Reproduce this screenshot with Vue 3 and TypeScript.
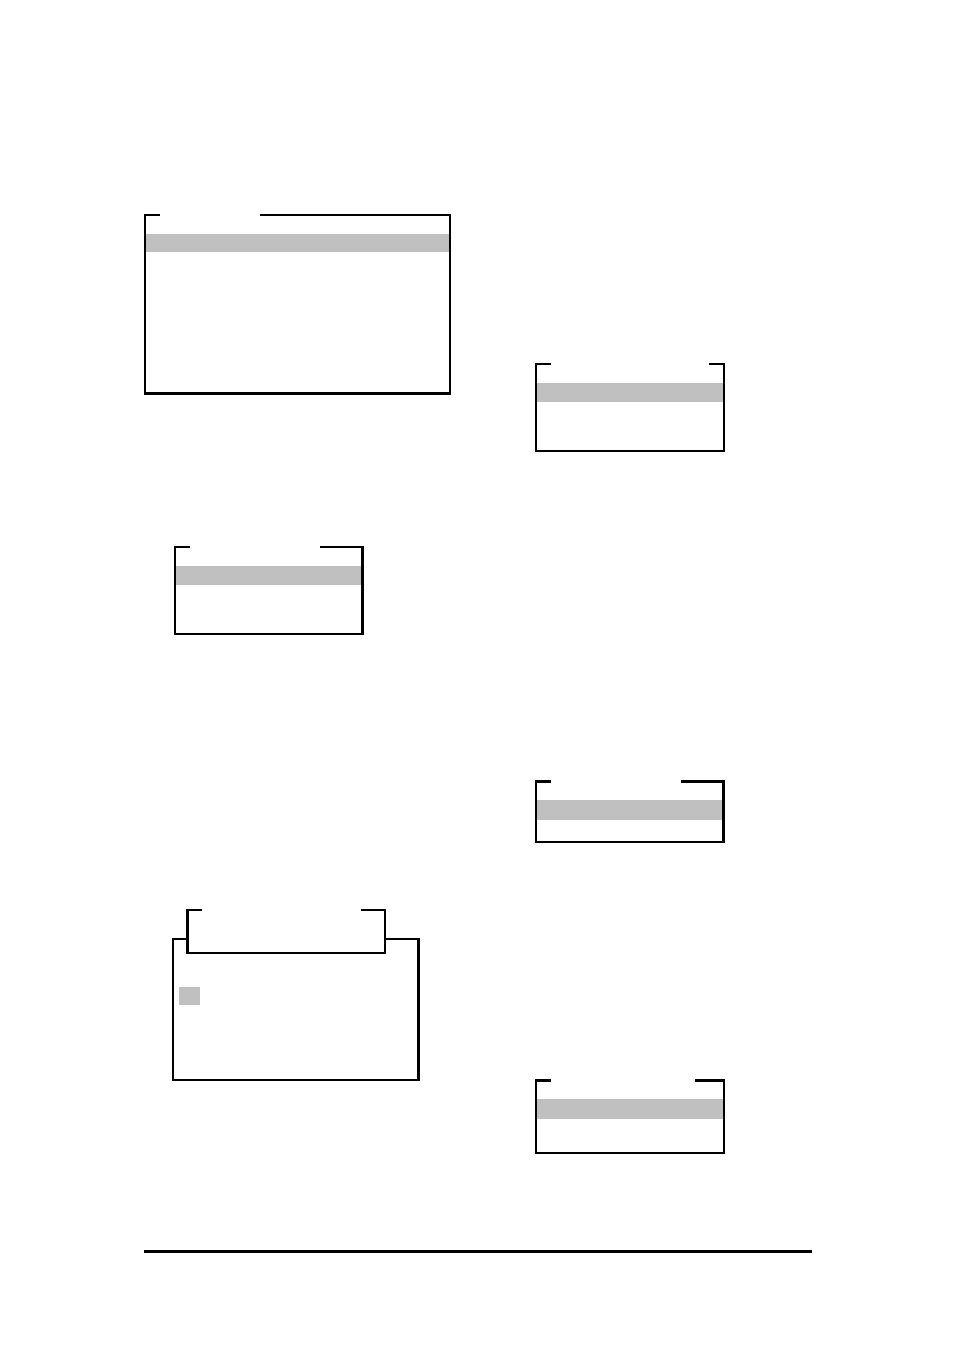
<script setup lang="ts">
interface Panel {
  id: string
  kind: string
}

const left: Panel[] = [
  { id: 'main', kind: 'main' },
  { id: 'first', kind: 'first' },
]

const right: Panel[] = [
  { id: 'second', kind: 'second' },
  { id: 'third', kind: 'third' },
  { id: 'fourth', kind: 'fourth' },
]
</script>

<template>
  <main class="page">
    <div class="columns">
      <div class="column column-left">
        <section v-for="p in left" :key="p.id" class="panel" :class="p.kind">
          <div class="top"><i class="lead"></i><i class="gap"></i><i class="trail"></i></div>
          <div class="bar"></div>
          <div class="body"></div>
        </section>
        <div class="stack">
          <section class="panel entry">
            <div class="top"><i class="lead"></i><i class="gap"></i><i class="trail"></i></div>
            <div class="body"></div>
          </section>
          <section class="sheet">
            <div class="cell"></div>
          </section>
        </div>
      </div>
      <div class="column column-right">
        <section v-for="p in right" :key="p.id" class="panel" :class="p.kind">
          <div class="top"><i class="lead"></i><i class="gap"></i><i class="trail"></i></div>
          <div class="bar"></div>
          <div class="body"></div>
        </section>
      </div>
    </div>
    <hr class="rule" />
  </main>
</template>

<style>
body {
  margin: 0;
  background: #fff;
}
</style>

<style scoped>
.page {
  box-sizing: border-box;
  padding: 0 142px 98px 144px;
  font-family: "Liberation Sans", Arial, sans-serif;
}

.columns {
  display: grid;
  grid-template-columns: 391fr 277fr;
}

.column-left {
  padding-top: 214px;
}

.column-right {
  padding-top: 363px;
}

.panel {
  --top: 2px;
  --right: 2px;
  --bottom: 2px;
  --left: 2px;
  --gap: 130px;
  --bar: 19px;
  --body: 48px;
  box-sizing: border-box;
  width: 100%;
  max-width: 190px;
  border: solid #000;
  border-width: 0 var(--right) var(--bottom) var(--left);
  background: #fff;
}

.top {
  display: flex;
  height: 20px;
}

.lead,
.trail {
  height: var(--top);
  background: #000;
}

.lead {
  flex: none;
  width: calc(16px - var(--left));
}

.gap {
  flex: none;
  width: var(--gap);
}

.trail {
  flex: 1;
}

.bar {
  height: var(--bar);
  background: #c0c0c0;
}

.body {
  height: var(--body);
}

.main {
  --bottom: 3px;
  --gap: 100px;
  --bar: 18px;
  --body: 140px;
  max-width: 307px;
}

.first {
  --right: 3px;
  margin: 151px 0 0 30px;
}

.second {
  --gap: 158px;
}

.third {
  --top: 3px;
  --right: 3px;
  --bar: 20px;
  --body: 21px;
  margin-top: 328px;
}

.fourth {
  --top: 3px;
  --gap: 144px;
  --bar: 20px;
  --body: 33px;
  margin-top: 236px;
}

.stack {
  display: grid;
  grid-template-rows: 29px auto;
  max-width: 248px;
  margin: 274px 0 0 28px;
}

.entry {
  --left: 3px;
  --gap: 159px;
  --body: 23px;
  z-index: 1;
  grid-area: 1 / 1 / 3 / 2;
  align-self: start;
  max-width: 200px;
  margin-left: 14px;
}

.sheet {
  box-sizing: border-box;
  grid-area: 2 / 1 / 3 / 2;
  min-height: 143px;
  padding: 47px 5px 0;
  border: 2px solid #000;
  border-right-width: 3px;
}

.cell {
  width: 21px;
  height: 18px;
  background: #c0c0c0;
}

.rule {
  height: 3px;
  margin: 96px 0 0;
  border: 0;
  background: #000;
}
</style>
